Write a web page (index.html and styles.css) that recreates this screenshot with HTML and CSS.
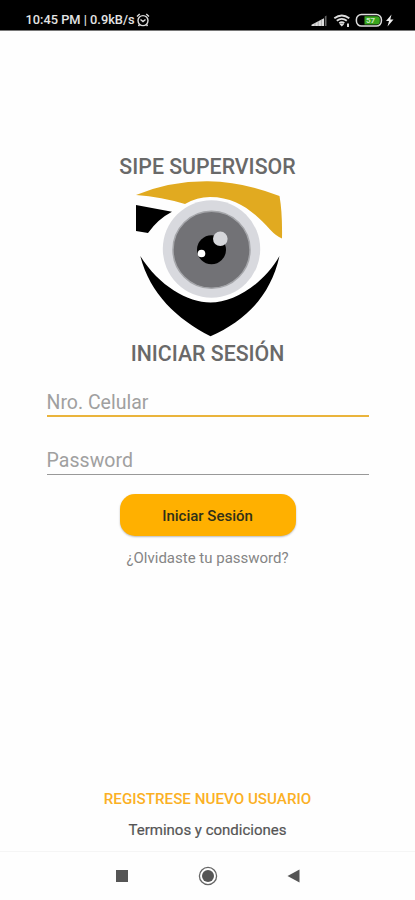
FILE: index.html
```html
<!DOCTYPE html>
<html lang="es">
<head>
<meta charset="utf-8">
<title>SIPE Supervisor</title>
<link rel="stylesheet" href="styles.css">
</head>
<body>
<div class="screen">
  <header class="status">
    <span class="clock">10:45 PM | 0.9kB/s</span>
    <svg class="alarm" width="14" height="14" viewBox="0 0 14 14" fill="none" stroke="#ddd" stroke-width="1.4"><circle cx="7" cy="7.6" r="5"/><path d="M1 3.5 3.7 1M13 3.5 10.3 1M4.5 6.500 7 8.600 9.500 6.500M3.500 11.500 2.500 13M10.500 11.500l1 1.500"/></svg>
    <svg class="indicators" width="84" height="16" viewBox="311 11 84 16">
      <path fill="#ddd" d="M311.500 25v-1.200L324 17.200V25z"/><path fill="#666" d="M324.800 25v-9.500l1.700-1V25z"/><path stroke="#777" stroke-width=".5" d="M315 22v3M318.200 20v5M321.400 18.500V25"/>
      <g fill="none" stroke="#ddd" stroke-width="1.900"><path d="M334.300 17.200q7.500-5.500 15 0M336.800 19.800q5-3.800 10 0M339.300 22.300q2.500-2 5 0"/></g>
      <path fill="#ddd" d="m339.500 23.300 2.300 2.200 2.300-2.200q-2.300-1.500-4.600 0zM347 22.500h2v3.500h-2z"/>
      <rect x="356.400" y="13.600" width="25" height="11.500" rx="5" fill="#000" stroke="#ddd" stroke-width="1.500"/>
      <path fill="#38a51d" d="M364.500 15.300h12.500q2.800 0 2.800 2.500v3q0 2.600-2.800 2.600h-12.500z"/>
      <text class="charge" x="366" y="22.300">57</text>
      <path fill="#eee" d="m391.500 13.500-5.500 6.500h3l-1.500 5.500 6-7h-3.200z"/>
    </svg>
  </header>
  <main class="login">
    <h1 class="title brand">SIPE SUPERVISOR</h1>
    <svg class="logo" width="160" height="160" viewBox="128 178 160 160">
      <path fill="#e1aa20" d="M136 195Q170 181 208 181.300Q244 182 279.500 196Q282.500 213 282 238.500Q276 236 270 229.500C254 212 237 197 210 197Q197 197 185 204Q162 197 136 195z"/>
      <path d="M136 205 172 211.800Q158 219 148 233L136 231z"/>
      <circle cx="211.500" cy="249" r="48.700" fill="#d8d9de"/>
      <circle cx="211.500" cy="249.800" r="38.500" fill="#727276" stroke="#a5a6aa" stroke-width="1.500"/>
      <circle cx="211.500" cy="249.800" r="14.500"/>
      <circle cx="220.300" cy="238.800" r="7.300" fill="#d5d6da"/>
      <circle cx="201.500" cy="253.500" r="3.800" fill="#fff"/>
      <path d="M140.300 256C159 286 188 302.500 210.500 302.500S262 286 279.500 256C270 298 244 321 210.500 336.300C177 319 150 294 140.300 256z"/>
    </svg>
    <h2 class="title heading">INICIAR SESIÓN</h2>
    <form class="form">
      <div class="field active"><span class="phone">Nro. Celular</span></div>
      <div class="field"><span class="pass">Password</span></div>
      <button class="submit" type="button"><span>Iniciar Sesión</span></button>
    </form>
    <a class="forgot">¿Olvidaste tu password?</a>
  </main>
  <footer class="links">
    <a class="register">REGISTRESE NUEVO USUARIO</a>
    <a class="terms">Terminos y condiciones</a>
  </footer>
  <nav class="navbar">
    <svg width="20" height="20" viewBox="0 0 20 20"><path fill="#555" d="M4 4h12v12H4z"/></svg>
    <svg width="20" height="20" viewBox="0 0 20 20"><circle cx="10" cy="10" r="8.600" fill="none" stroke="#666" stroke-width="1.300"/><circle cx="10" cy="10" r="6" fill="#555"/></svg>
    <svg width="20" height="20" viewBox="0 0 20 20"><path fill="#555" d="M3.500 10 15.500 3.500v13z"/></svg>
  </nav>
</div>
</body>
</html>
```
FILE: styles.css
```css
* { box-sizing: border-box; }
body { margin: 0; background: #fefefe; font-family: Roboto, "Liberation Sans", sans-serif; }
.screen { width: 415px; height: 900px; display: flex; flex-direction: column; overflow: hidden; }
.status { height: 31px; background: #000; border-bottom: 1px solid #777; display: flex; align-items: center; padding: 9px 20px 0 25.5px; flex: none; }
.clock { color: #e4e4e4; font-size: 12.8px; font-weight: 500; line-height: 16px; white-space: nowrap; }
.alarm { margin-left: 2px; }
.indicators { margin-left: auto; }
.charge { font-size: 8px; font-weight: 700; fill: #cce8c5; }
.login { display: flex; flex-direction: column; align-items: center; padding-top: 123px; }
.title { margin: 0; font-size: 21.3px; line-height: 26px; font-weight: 500; color: #696969; white-space: nowrap; }
.logo { margin-top: -2px; }
.heading { margin-top: 3px; }
.form { width: 322px; display: flex; flex-direction: column; align-items: center; }
.field { width: 100%; height: 50px; border-bottom: 1px solid #999; padding: 24px 0 0; font-size: 19.5px; line-height: 24px; color: #a0a0a0; }
.field + .field { height: 58px; padding-top: 32px; }
.field.active { border-bottom: 2px solid #eab43c; }
.pass { letter-spacing: 0.05px; }
.submit { width: 176px; height: 42px; margin-top: 19px; padding: 2px 0 0; border: 0; border-radius: 15px; background: #ffb000; box-shadow: 0 1px 2px #0004; font: 500 15px/20px Roboto, sans-serif; color: #303018; }
.forgot { margin-top: 12px; font-size: 15px; line-height: 20px; color: #858585; }
.links { margin-top: auto; display: flex; flex-direction: column; align-items: center; padding-bottom: 11px; }
.register { font-size: 15.2px; font-weight: 500; line-height: 20px; color: #fbb024; }
.terms { margin-top: 11px; font-size: 15px; line-height: 20px; color: #555; -webkit-text-stroke: 0.2px #555; }
.navbar { height: 49px; flex: none; border-top: 1px solid #f5f5f5; display: flex; justify-content: center; gap: 66px; align-items: center; }
```
